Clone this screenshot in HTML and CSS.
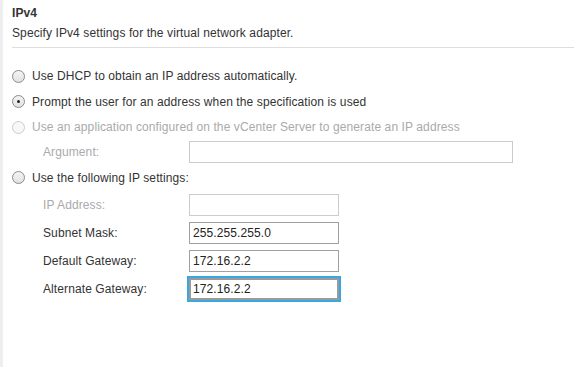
FILE: index.html
```html
<!DOCTYPE html>
<html>

<head>
    <title>IPv4</title>
    <link rel="stylesheet" href="styles.css">
</head>

<body>
    <div class="page">
        <div class="header">
            <h1>IPv4</h1>
            <p class="subtitle">Specify IPv4 settings for the virtual network adapter.</p>
        </div>

        <div class="options">
            <label class="option">
                <span class="radio"></span>
                Use DHCP to obtain an IP address automatically.
            </label>
            <label class="option">
                <span class="radio checked"></span>
                Prompt the user for an address when the specification is used
            </label>
            <label class="option disabled">
                <span class="radio"></span>
                Use an application configured on the vCenter Server to generate an IP address
            </label>
            <div class="field disabled argument">
                <span class="field-label">Argument:</span>
                <span class="input wide"></span>
            </div>
            <label class="option">
                <span class="radio"></span>
                Use the following IP settings:
            </label>
            <div class="field disabled first">
                <span class="field-label">IP Address:</span>
                <span class="input"></span>
            </div>
            <div class="field">
                <span class="field-label">Subnet Mask:</span>
                <span class="input">255.255.255.0</span>
            </div>
            <div class="field">
                <span class="field-label">Default Gateway:</span>
                <span class="input">172.16.2.2</span>
            </div>
            <div class="field">
                <span class="field-label">Alternate Gateway:</span>
                <span class="input focused">172.16.2.2</span>
            </div>
        </div>
    </div>
</body>

</html>
```

FILE: styles.css
```css
html, body {
    margin: 0;
    height: 100%;
}

body {
    background-color: #fff;
    font-family: Arial, "Liberation Sans", sans-serif;
    font-size: 12px;
    letter-spacing: 0.1px;
    color: #333;
    border-left: 3px solid #eeeeee;
    box-sizing: border-box;
}

.page {
    padding: 5px 0 0 9px;
}

.header {
    border-bottom: 1px solid #dddddd;
    padding-bottom: 6px;
}

h1 {
    font-size: 12px;
    font-weight: bold;
    margin: 0;
    line-height: 16px;
    color: #333;
}

.subtitle {
    margin: 4px 0 0 0;
    line-height: 16px;
}

.options {
    padding-top: 20px;
    display: flex;
    flex-direction: column;
}

.option {
    display: flex;
    align-items: center;
    height: 16px;
    margin-bottom: 9.5px;
    gap: 7px;
}

.option.disabled {
    color: #aaaaaa;
}

.radio {
    width: 11px;
    height: 11px;
    border: 1px solid #8a8a8a;
    border-radius: 50%;
    background: linear-gradient(#f4f4f4, #e2e2e2);
    position: relative;
    flex-shrink: 0;
}

.option.disabled .radio {
    border-color: #cccccc;
    background: #f7f7f7;
}

.radio.checked::after {
    content: "";
    position: absolute;
    left: 4px;
    top: 4px;
    width: 3px;
    height: 3px;
    border-radius: 50%;
    background: #222;
}

.field {
    display: flex;
    align-items: center;
    padding-left: 31px;
    height: 22px;
    margin-bottom: 6px;
}

.field.argument {
    margin-top: -4px;
    margin-bottom: 7px;
}

.field.first {
    margin-top: -1px;
}

.field.disabled .field-label {
    color: #aaaaaa;
}

.field-label {
    width: 146px;
}

.input {
    box-sizing: border-box;
    width: 150px;
    height: 22px;
    border: 1px solid #a0a0a0;
    background: #fff;
    padding: 0 3px;
    line-height: 20px;
    color: #222;
}

.field.disabled .input {
    border-color: #cccccc;
}

.input.wide {
    width: 324px;
}

.input.focused {
    outline: 2px solid #3aa8e0;
    border-color: #9a9a9a;
    border-width: 2px;
    line-height: 18px;
    padding-left: 2px;
}
```
